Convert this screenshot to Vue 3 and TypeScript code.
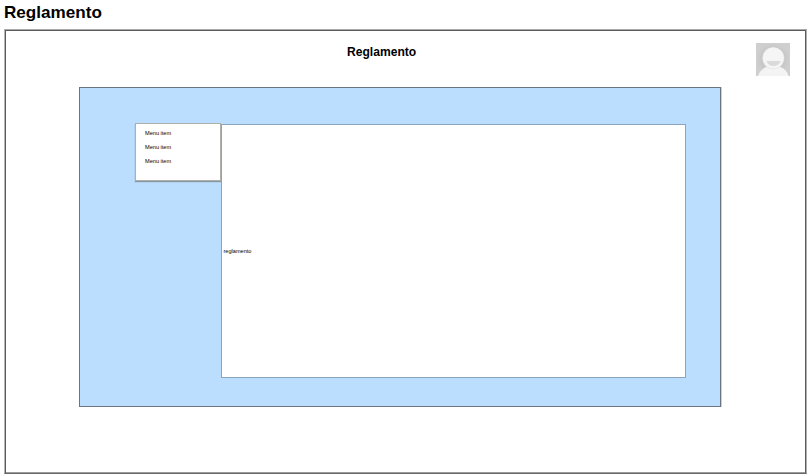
<script setup lang="ts">
const title: string = 'Reglamento'
const menuItems: string[] = ['Menu item', 'Menu item', 'Menu item']
</script>

<template>
  <div class="page">
    <h1 class="page-title">{{ title }}</h1>
    <main class="frame">
      <header class="header">
        <h2 class="heading">{{ title }}</h2>
        <svg class="avatar" viewBox="0 0 34 33" aria-hidden="true">
          <defs>
            <radialGradient id="avatar-bg">
              <stop offset="0.45" stop-color="#c2c2c2" />
              <stop offset="1" stop-color="#cfcfcf" />
            </radialGradient>
          </defs>
          <rect width="34" height="33" fill="url(#avatar-bg)" />
          <path d="M2 33C3.500 28 7 25 12 23.500H23C28 25 31 28 32.500 33Z" fill="#f4f4f4" />
          <circle cx="17.300" cy="15.300" r="11" fill="#e4e4e4" />
          <circle cx="17.300" cy="15" r="10.500" fill="#f5f5f5" />
          <path d="M10.500 18H24.500Q23 23 17.500 23Q12 23 10.500 18Z" fill="#dadada" />
        </svg>
      </header>
      <section class="canvas">
        <nav class="menu">
          <span v-for="(item, i) in menuItems" :key="i" class="menu-item">{{ item }}</span>
        </nav>
        <article class="content">reglamento</article>
      </section>
    </main>
  </div>
</template>

<style>
body {
  background: #fff;
  overflow: hidden;
}
</style>

<style scoped>
.page {
  box-sizing: border-box;
  width: 809px;
  height: 476px;
  padding: 2px 2px 2px 4px;
  color: #000;
  font-family: 'Liberation Sans', sans-serif;
}
.page-title {
  height: 27px;
  margin: 0;
  font-size: 17.1px;
  line-height: 21px;
}
.frame {
  box-sizing: border-box;
  width: 803px;
  height: 445px;
  border: 1px solid;
  border-color: #a8a8a8 #b0b0b0 #696969 #b4b4b4;
  box-shadow: inset 1px 1px #5c5c5c, inset -1px 0 #5c5c5c, inset 0 -1px #9c9c9c;
}
.header {
  display: flex;
  justify-content: space-between;
  height: 57px;
  padding: 13px 16px 0 342px;
  box-sizing: border-box;
}
.heading {
  margin: 0;
  font-size: 12.1px;
  line-height: 18px;
}
.avatar {
  width: 34px;
  height: 33px;
}
.canvas {
  box-sizing: border-box;
  display: flex;
  align-items: flex-start;
  width: 642px;
  height: 320px;
  margin-left: 74px;
  padding: 35px 0 0 55px;
  border: 1px solid #6a757f;
  background: #bbdeff;
  box-shadow: 1px 0 #ccd0d4;
}
.menu {
  box-sizing: border-box;
  display: flex;
  flex-direction: column;
  width: 86px;
  height: 58px;
  padding: 2px 0 0 9px;
  border: 1px solid #adb1aa;
  background: #fff;
  box-shadow: 0 1px 1px #8795a2;
}
.menu-item {
  height: 14px;
  font-size: 5.6px;
  line-height: 14px;
}
.content {
  box-sizing: border-box;
  display: flex;
  align-items: center;
  width: 465px;
  height: 254px;
  margin-top: 1px;
  padding-left: 1.5px;
  border: 1px solid #8aa4bc;
  background: #fff;
  font-size: 5.6px;
}
</style>
